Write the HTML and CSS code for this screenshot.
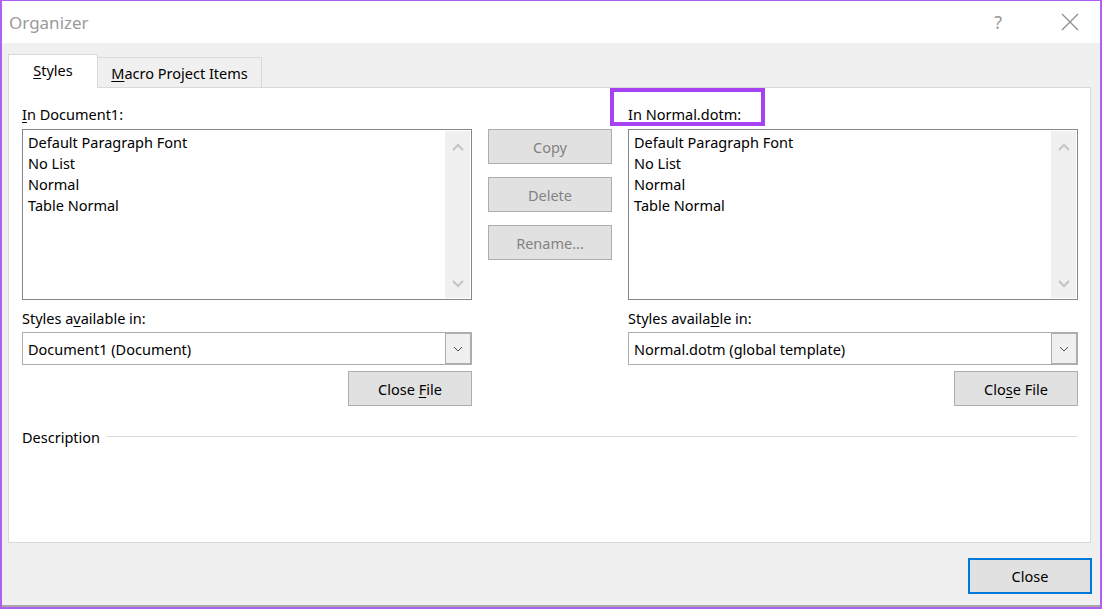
FILE: index.html
```html
<!DOCTYPE html>
<html>
<head>
<meta charset="utf-8">
<link rel="stylesheet" href="styles.css">
</head>
<body>
<div class="window">
  <div class="titlebar">
    <span class="title">Organizer</span>
    <div class="controls">
      <span class="help">?</span>
      <svg class="xicon" width="18" height="18" viewBox="0 0 18 18"><path d="M1 1 L17 17 M17 1 L1 17" stroke="#8c8c8c" stroke-width="1.2" fill="none"/></svg>
    </div>
  </div>
  <div class="body">
    <div class="tabs">
      <div class="tab active"><span><u>S</u>tyles</span></div>
      <div class="tab"><span><u>M</u>acro Project Items</span></div>
    </div>
    <div class="panel">
      <div class="columns">
        <div class="col">
          <div class="label"><u>I</u>n Document1:</div>
          <div class="list">
            <ul class="items">
              <li>Default Paragraph Font</li>
              <li>No List</li>
              <li>Normal</li>
              <li>Table Normal</li>
            </ul>
            <div class="scrollbar">
              <svg width="12" height="8" viewBox="0 0 12 8"><path d="M1 7 L6 2 L11 7" stroke="#c4c4c4" stroke-width="2" fill="none"/></svg>
              <svg width="12" height="8" viewBox="0 0 12 8"><path d="M1 1 L6 6 L11 1" stroke="#c4c4c4" stroke-width="2" fill="none"/></svg>
            </div>
          </div>
          <div class="label sub">Styles a<u>v</u>ailable in:</div>
          <div class="select">
            <span class="select-text">Document1 (Document)</span>
            <div class="select-btn"><svg width="10" height="6" viewBox="0 0 10 6"><path d="M1 1 L5 5 L9 1" stroke="#5a4a4a" stroke-width="1" fill="none"/></svg></div>
          </div>
          <div class="row-end"><div class="btn"><span>Close <u>F</u>ile</span></div></div>
        </div>
        <div class="mid">
          <div class="btn disabled"><span>Copy</span></div>
          <div class="btn disabled"><span>Delete</span></div>
          <div class="btn disabled"><span>Rename...</span></div>
        </div>
        <div class="col">
          <div class="label highlight-wrap">I<u>n</u> Normal.dotm:<div class="highlight"></div></div>
          <div class="list">
            <ul class="items">
              <li>Default Paragraph Font</li>
              <li>No List</li>
              <li>Normal</li>
              <li>Table Normal</li>
            </ul>
            <div class="scrollbar">
              <svg width="12" height="8" viewBox="0 0 12 8"><path d="M1 7 L6 2 L11 7" stroke="#c4c4c4" stroke-width="2" fill="none"/></svg>
              <svg width="12" height="8" viewBox="0 0 12 8"><path d="M1 1 L6 6 L11 1" stroke="#c4c4c4" stroke-width="2" fill="none"/></svg>
            </div>
          </div>
          <div class="label sub">Styles availa<u>b</u>le in:</div>
          <div class="select">
            <span class="select-text">Normal.dotm (global template)</span>
            <div class="select-btn"><svg width="10" height="6" viewBox="0 0 10 6"><path d="M1 1 L5 5 L9 1" stroke="#5a4a4a" stroke-width="1" fill="none"/></svg></div>
          </div>
          <div class="row-end"><div class="btn"><span>Clo<u>s</u>e File</span></div></div>
        </div>
      </div>
      <div class="description">
        <span>Description</span>
        <div class="rule"></div>
      </div>
    </div>
    <div class="footer">
      <div class="btn primary"><span>Close</span></div>
    </div>
  </div>
</div>
</body>
</html>
```

FILE: styles.css
```css
* { box-sizing: border-box; }
html, body { margin: 0; padding: 0; background: #ffffff; }
body {
  font-family: "Noto Sans", "Open Sans", sans-serif;
  font-size: 14.5px;
  color: #000;
}
u { text-decoration: underline; text-underline-offset: 2px; text-decoration-thickness: 1px; }
.window {
  width: 1102px;
  height: 609px;
  border: 2px solid #b15ef5;
  border-top-width: 1px;
  background: #f0f0f0;
  display: flex;
  flex-direction: column;
  overflow: hidden;
}
.titlebar {
  height: 42px;
  background: #fff;
  display: flex;
  align-items: center;
  justify-content: space-between;
  padding-left: 7px;
  flex: none;
}
.title { font-size: 17px; color: #9a9a9a; }
.controls { display: flex; align-items: center; }
.help { font-size: 18px; color: #9a9a9a; margin-right: 59px; }
.xicon { margin-right: 21px; }
.body {
  flex: 1;
  display: flex;
  flex-direction: column;
  padding: 0 7px 0 6px;
  border-bottom: 2px solid #a8a8a8;
}
.tabs {
  display: flex;
  align-items: flex-end;
  padding-top: 11px;
}
.tab {
  height: 30px;
  padding: 0 12px;
  border: 1px solid #d9d9d9;
  border-bottom: none;
  background: #f0f0f0;
  display: flex;
  align-items: center;
  justify-content: center;
  width: 165px;
  margin-left: -1px;
}
.tab.active {
  width: 90px;
  height: 34px;
  margin-left: 0;
  background: #fff;
  margin-bottom: -1px;
  position: relative;
  z-index: 1;
  padding-bottom: 3px;
}
.panel {
  width: 1083px;
  height: 456px;
  background: #fff;
  border: 1px solid #d9d9d9;
  padding: 16px 12px 0 13px;
}
.columns { display: flex; gap: 16px; }
.col { width: 450px; display: flex; flex-direction: column; }
.label { height: 20px; line-height: 20px; margin-bottom: 5px; }
.label.sub { margin-top: 8px; margin-bottom: 4px; }
.highlight-wrap { position: relative; }
.highlight {
  position: absolute;
  left: -18px;
  top: -16px;
  width: 155px;
  height: 38px;
  border: 4px solid #a542f2;
}
.list {
  height: 171px;
  border: 1px solid #828790;
  display: flex;
  background: #fff;
}
.items {
  list-style: none;
  margin: 0;
  padding: 2px 0 0 5px;
  flex: 1;
}
.items li { height: 21px; line-height: 21px; }
.scrollbar {
  width: 25px;
  margin: 1px 1px 1px 0;
  background: #f0f0f0;
  display: flex;
  flex-direction: column;
  align-items: center;
  justify-content: space-between;
  padding: 12px 0 10px;
}
.select {
  height: 33px;
  border: 1px solid #adadad;
  display: flex;
  align-items: center;
  background: #fff;
}
.select-text { flex: 1; padding-left: 5px; }
.select-btn {
  width: 26px;
  height: 31px;
  border: 1px solid #adadad;
  background: #f0f0f0;
  display: flex;
  align-items: center;
  justify-content: center;
}
.row-end { display: flex; justify-content: flex-end; margin-top: 6px; }
.btn {
  width: 124px;
  height: 35px;
  background: #e1e1e1;
  border: 1px solid #adadad;
  display: flex;
  align-items: center;
  justify-content: center;
  color: #000;
}
.btn.disabled { color: #838383; }
.mid {
  width: 124px;
  display: flex;
  flex-direction: column;
  gap: 13px;
  padding-top: 25px;
}
.description {
  display: flex;
  align-items: center;
  margin-top: 21px;
  height: 20px;
}
.description .rule {
  flex: 1;
  height: 1px;
  background: #dcdcdc;
  margin-left: 6px;
  margin-top: -1px;
}
.footer {
  display: flex;
  justify-content: flex-end;
  padding-top: 15px;
}
.btn.primary {
  border: 2px solid #0078d7;
  width: 124px;
  height: 36px;
  margin-right: 1px;
}
```
